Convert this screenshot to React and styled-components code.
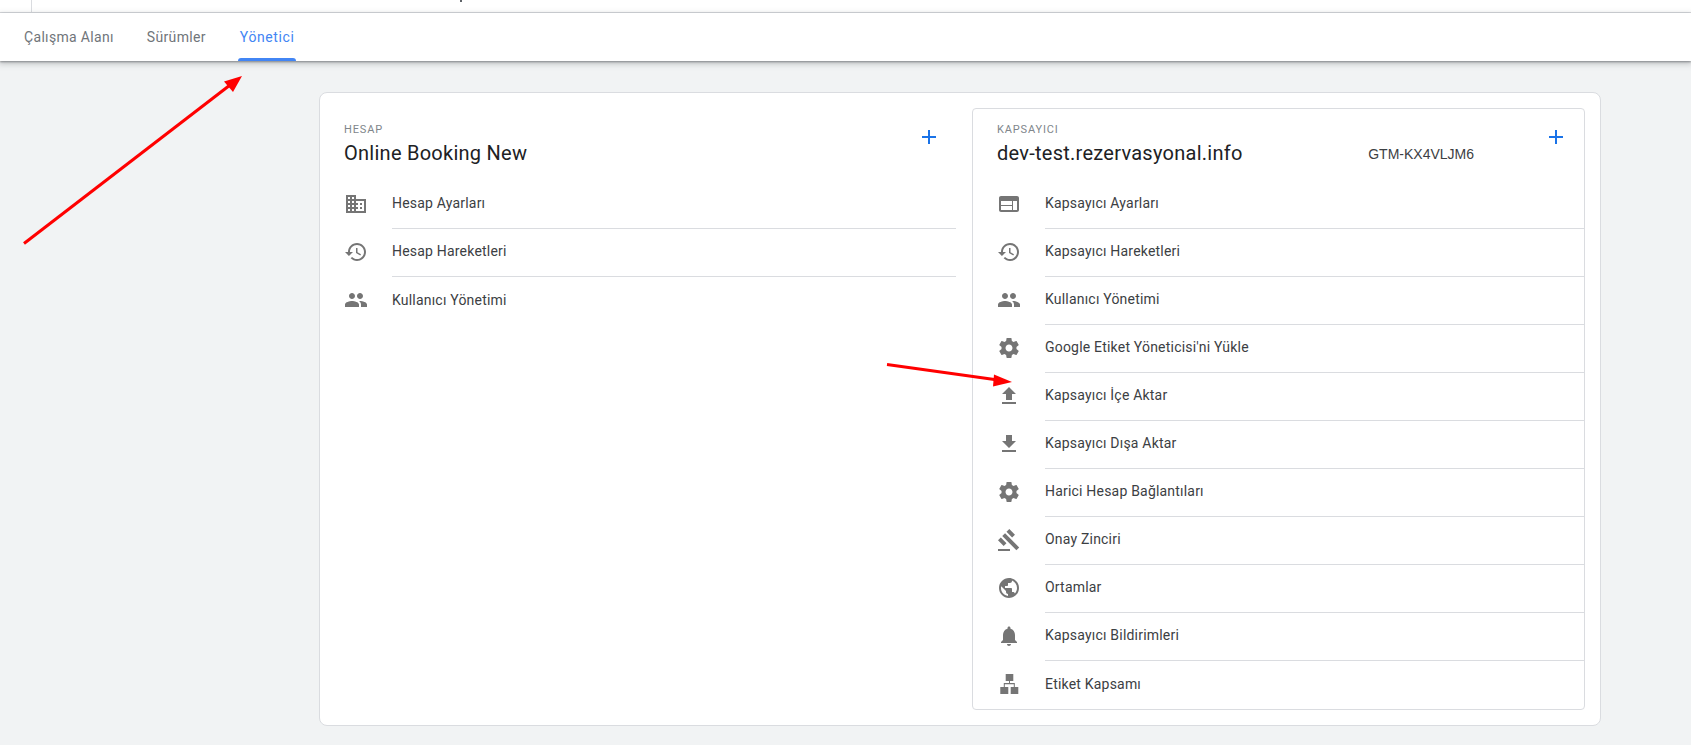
import React from "react";
import styled, { createGlobalStyle } from "styled-components";

const Global = createGlobalStyle`
  html, body { margin: 0; padding: 0; background: #f1f3f4; }
  body { font-family: Roboto, "Liberation Sans", sans-serif; overflow: hidden; }
`;

const Page = styled.div`
  position: relative;
  width: 1691px;
  height: 745px;
  overflow: hidden;
  background: #f1f3f4;
`;

const TopStrip = styled.div`
  display: flex;
  height: 12px;
  background: #fff;
  border-bottom: 1px solid #dadce0;
  padding-left: 31px;
`;

const StripDivider = styled.div`
  width: 1px;
  height: 12px;
  background: #dadce0;
`;

const ClippedGlyph = styled.div`
  width: 2px;
  height: 2px;
  margin-left: 428px;
  background: #5f6368;
`;

const TabBar = styled.nav`
  position: relative;
  z-index: 1;
  display: flex;
  height: 48px;
  padding-left: 22px;
  gap: 29px;
  background: #fff;
  box-shadow: 0 1px 2px rgba(60, 64, 67, 0.5), 0 2px 6px 1px rgba(60, 64, 67, 0.25);
`;

const Tab = styled.div`
  position: relative;
  display: flex;
  align-items: center;
  justify-content: center;
  height: 48px;
  padding: 0 2px 1px;
  margin-left: ${(p) => (p.$active ? "1px" : "0")};
  box-sizing: border-box;
  font-size: 14px;
  font-weight: 400;
  letter-spacing: ${(p) => (p.$active ? "0.6px" : "0.33px")};
  color: ${(p) => (p.$active ? "#4285f4" : "#70757a")};
  ${(p) =>
    p.$active &&
    `&::after {
      content: "";
      position: absolute;
      left: 0;
      right: 0;
      bottom: 0;
      height: 3px;
      border-radius: 3px 3px 0 0;
      background: #4285f4;
    }`}
`;

const Main = styled.main`
  display: flex;
  justify-content: flex-start;
  padding: 31px 0 0 319px;
`;

const Shell = styled.section`
  display: flex;
  box-sizing: border-box;
  width: 1282px;
  height: 634px;
  padding: 15px;
  gap: 16px;
  background: #fff;
  border: 1px solid #dadce0;
  border-radius: 8px;
`;

const Column = styled.div`
  position: relative;
  flex: ${(p) => (p.$framed ? "0 0 613px" : "1 1 0")};
  box-sizing: border-box;
  padding-left: ${(p) => (p.$framed ? "24px" : "8px")};
  ${(p) =>
    p.$framed
      ? `border: 1px solid #dadce0;
         border-radius: 4px;`
      : `border-style: solid;
         border-color: transparent;
         border-width: 1px 0 0 1px;`}
`;

const Header = styled.header`
  position: relative;
  height: 72px;
  padding-top: 15px;
  box-sizing: border-box;
`;

const Eyebrow = styled.div`
  font-size: 11px;
  line-height: 12px;
  letter-spacing: 0.85px;
  color: #80868b;
`;

const TitleRow = styled.div`
  display: flex;
  align-items: center;
  margin-top: 4px;
`;

const Title = styled.h2`
  margin: 0;
  font-family: Roboto, sans-serif;
  font-size: 20px;
  line-height: 26px;
  font-weight: 400;
  letter-spacing: 0.26px;
  color: #202124;
`;

const ContainerId = styled.span`
  position: absolute;
  right: 110px;
  top: 37px;
  font-family: "Liberation Sans", Arial, sans-serif;
  font-size: 14px;
  line-height: 16px;
  color: #3c4043;
`;

const AddButton = styled.button`
  position: absolute;
  top: 18px;
  right: ${(p) => p.$right}px;
  width: 20px;
  height: 20px;
  padding: 0;
  border: 0;
  background: none;
  color: #1a73e8;
  display: flex;
  align-items: center;
  justify-content: center;
`;

const Row = styled.div`
  display: flex;
  align-items: stretch;
  height: 48px;
`;

const IconSlot = styled.div`
  flex: 0 0 48px;
  display: flex;
  align-items: center;
  padding-bottom: 2px;
  box-sizing: border-box;
  color: #757575;
  svg { display: block; fill: currentColor; }
`;

const RowLabel = styled.div`
  flex: 1;
  display: flex;
  align-items: center;
  padding-bottom: 3px;
  font-size: 14px;
  letter-spacing: 0.2px;
  color: #3c4043;
  border-bottom: ${(p) => (p.$last ? "0" : "1px solid #dadce0")};
`;

const Annotation = styled.svg`
  position: absolute;
  inset: 0;
  z-index: 2;
  pointer-events: none;
`;

const P = {
  domain: "M12 7V3H2v18h20V7H12zM6 19H4v-2h2v2zm0-4H4v-2h2v2zm0-4H4V9h2v2zm0-4H4V5h2v2zm4 12H8v-2h2v2zm0-4H8v-2h2v2zm0-4H8V9h2v2zm0-4H8V5h2v2zm10 12h-8v-2h2v-2h-2v-2h2v-2h-2V9h8v10zm-2-8h-2v2h2v-2zm0 4h-2v2h2v-2z",
  history: "M13 3c-4.97 0-9 4.03-9 9H1l3.89 3.89.07.14L9 12H6c0-3.87 3.13-7 7-7s7 3.13 7 7-3.13 7-7 7c-1.93 0-3.68-.79-4.94-2.06l-1.42 1.42C8.27 19.99 10.51 21 13 21c4.97 0 9-4.03 9-9s-4.03-9-9-9zm-1 5v5l4.28 2.54.72-1.21-3.5-2.08V8H12z",
  people: "M16 11c1.66 0 2.99-1.34 2.99-3S17.66 5 16 5c-1.66 0-3 1.34-3 3s1.34 3 3 3zm-8 0c1.66 0 2.99-1.34 2.99-3S9.66 5 8 5C6.34 5 5 6.34 5 8s1.34 3 3 3zm0 2c-2.33 0-7 1.17-7 3.5V19h14v-2.5c0-2.33-4.67-3.5-7-3.5zm8 0c-.29 0-.62.02-.97.05 1.16.84 1.97 1.97 1.97 3.45V19h6v-2.5c0-2.33-4.67-3.5-7-3.5z",
  web: "M20 4H4c-1.1 0-1.99.9-1.99 2L2 18c0 1.1.9 2 2 2h16c1.1 0 2-.9 2-2V6c0-1.1-.9-2-2-2zm-5 14H4v-4h11v4zm0-5H4V9h11v4zm5 5h-4V9h4v9z",
  settings: "M19.43 12.98c.04-.32.07-.64.07-.98s-.03-.66-.07-.98l2.11-1.65c.19-.15.24-.42.12-.64l-2-3.46c-.12-.22-.39-.3-.61-.22l-2.49 1c-.52-.4-1.08-.73-1.69-.98l-.38-2.65C14.46 2.18 14.25 2 14 2h-4c-.25 0-.46.18-.49.42l-.38 2.65c-.61.25-1.17.59-1.69.98l-2.49-1c-.23-.09-.49 0-.61.22l-2 3.46c-.13.22-.07.49.12.64l2.11 1.65c-.04.32-.07.65-.07.98s.03.66.07.98l-2.11 1.65c-.19.15-.24.42-.12.64l2 3.46c.12.22.39.3.61.22l2.49-1c.52.4 1.08.73 1.69.98l.38 2.65c.03.24.24.42.49.42h4c.25 0 .46-.18.49-.42l.38-2.65c.61-.25 1.17-.59 1.69-.98l2.49 1c.23.09.49 0 .61-.22l2-3.46c.12-.22.07-.49-.12-.64l-2.11-1.65zM12 15.5c-1.93 0-3.5-1.57-3.5-3.5s1.57-3.5 3.5-3.5 3.5 1.57 3.5 3.5-1.57 3.5-3.5 3.5z",
  upload: "M9 16h6v-6h4l-7-7-7 7h4zm-4 2h14v2H5z",
  download: "M19 9h-4V3H9v6H5l7 7 7-7zM5 18v2h14v-2H5z",
  gavel: "M1 21h12v2H1zM5.245 8.07l2.83-2.827 14.14 14.142-2.828 2.828zM12.317 1l5.657 5.656-2.83 2.83-5.654-5.66zM3.825 9.485l5.657 5.657-2.828 2.828-5.657-5.657z",
  globe: "M12 2C6.48 2 2 6.48 2 12s4.48 10 10 10 10-4.48 10-10S17.52 2 12 2zm-1 17.93c-3.95-.49-7-3.85-7-7.93 0-.62.08-1.21.21-1.79L9 15v1c0 1.1.9 2 2 2v1.93zm6.9-2.54c-.26-.81-1-1.39-1.9-1.39h-1v-3c0-.55-.45-1-1-1H8v-2h2c.55 0 1-.45 1-1V7h2c1.1 0 2-.9 2-2v-.41c2.93 1.19 5 4.06 5 7.41 0 2.08-.8 3.97-2.1 5.39z",
  bell: "M12 22c1.1 0 2-.9 2-2h-4c0 1.1.89 2 2 2zm6-6v-5c0-3.07-1.64-5.64-4.5-6.32V4c0-.83-.67-1.5-1.5-1.5s-1.5.67-1.5 1.5v.68C7.63 5.36 6 7.92 6 11v5l-2 2v1h16v-1l-2-2z",
  scope: "M8.7 2h7.6v7H8.7zM12 9h1v2.5h-1zM6.8 11h11v1.2h-11zM6.8 11h1v4h-1zM16.8 11h1v4h-1zM3.3 15h8v7h-8zM13.7 15h7.6v7h-7.6z",
};

const Icon = ({ d }) => (
  <svg width="24" height="24" viewBox="0 0 24 24" aria-hidden="true">
    <path d={d} />
  </svg>
);

const Plus = () => (
  <svg width="14" height="14" viewBox="0 0 14 14" aria-hidden="true">
    <path d="M6 0h2v6h6v2H8v6H6V8H0V6h6z" fill="currentColor" />
  </svg>
);

const accountRows = [
  ["domain", "Hesap Ayarları"],
  ["history", "Hesap Hareketleri"],
  ["people", "Kullanıcı Yönetimi"],
];

const containerRows = [
  ["web", "Kapsayıcı Ayarları"],
  ["history", "Kapsayıcı Hareketleri"],
  ["people", "Kullanıcı Yönetimi"],
  ["settings", "Google Etiket Yöneticisi'ni Yükle"],
  ["upload", "Kapsayıcı İçe Aktar"],
  ["download", "Kapsayıcı Dışa Aktar"],
  ["settings", "Harici Hesap Bağlantıları"],
  ["gavel", "Onay Zinciri"],
  ["globe", "Ortamlar"],
  ["bell", "Kapsayıcı Bildirimleri"],
  ["scope", "Etiket Kapsamı"],
];

const RowList = ({ rows }) =>
  rows.map(([icon, label], i) => (
    <Row key={label}>
      <IconSlot>
        <Icon d={P[icon]} />
      </IconSlot>
      <RowLabel $last={i === rows.length - 1}>{label}</RowLabel>
    </Row>
  ));

export default function App() {
  return (
    <Page>
      <Global />
      <TopStrip>
        <StripDivider />
        <ClippedGlyph />
      </TopStrip>
      <TabBar>
        <Tab>Çalışma Alanı</Tab>
        <Tab>Sürümler</Tab>
        <Tab $active>Yönetici</Tab>
      </TabBar>
      <Main>
        <Shell>
          <Column>
            <Header>
              <Eyebrow>HESAP</Eyebrow>
              <TitleRow>
                <Title>Online Booking New</Title>
              </TitleRow>
              <AddButton $right={17}>
                <Plus />
              </AddButton>
            </Header>
            <RowList rows={accountRows} />
          </Column>
          <Column $framed>
            <Header>
              <Eyebrow>KAPSAYICI</Eyebrow>
              <TitleRow>
                <Title>dev-test.rezervasyonal.info</Title>
              </TitleRow>
              <ContainerId>GTM-KX4VLJM6</ContainerId>
              <AddButton $right={18}>
                <Plus />
              </AddButton>
            </Header>
            <RowList rows={containerRows} />
          </Column>
        </Shell>
      </Main>
      <Annotation width="1691" height="745" viewBox="0 0 1691 745">
        <path d="M24 243.5 L232 83.5" stroke="#ff0000" strokeWidth="3" fill="none" />
        <path d="M242 76 L224 81.5 L233 92 Z" fill="#ff0000" />
        <path d="M887 364.5 L998 380" stroke="#ff0000" strokeWidth="3" fill="none" />
        <path d="M1012 382 L994 374.5 L993 386.5 Z" fill="#ff0000" />
      </Annotation>
    </Page>
  );
}
